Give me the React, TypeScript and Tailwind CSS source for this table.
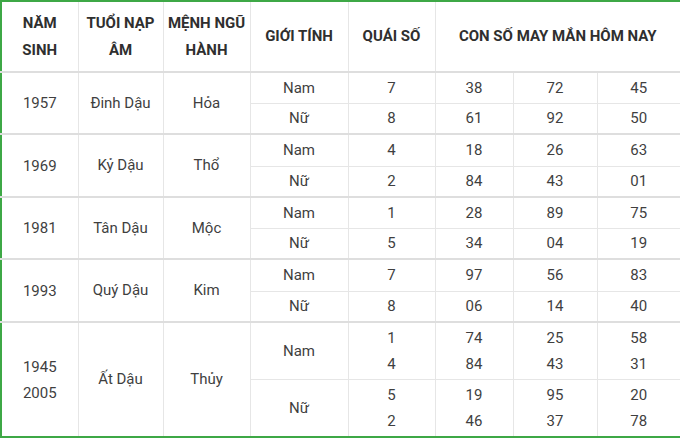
import React from "react";

type Sub = { g: string; q: string[]; n: string[][] };
type Group = { years: string[]; tuoi: string; menh: string; subs: Sub[]; h: number[] };

const groups: Group[] = [
  { years: ["1957"], tuoi: "Đinh Dậu", menh: "Hỏa", h: [31, 31], subs: [
    { g: "Nam", q: ["7"], n: [["38"], ["72"], ["45"]] },
    { g: "Nữ", q: ["8"], n: [["61"], ["92"], ["50"]] },
  ] },
  { years: ["1969"], tuoi: "Kỷ Dậu", menh: "Thổ", h: [32, 31], subs: [
    { g: "Nam", q: ["4"], n: [["18"], ["26"], ["63"]] },
    { g: "Nữ", q: ["2"], n: [["84"], ["43"], ["01"]] },
  ] },
  { years: ["1981"], tuoi: "Tân Dậu", menh: "Mộc", h: [31, 31], subs: [
    { g: "Nam", q: ["1"], n: [["28"], ["89"], ["75"]] },
    { g: "Nữ", q: ["5"], n: [["34"], ["04"], ["19"]] },
  ] },
  { years: ["1993"], tuoi: "Quý Dậu", menh: "Kim", h: [32, 31], subs: [
    { g: "Nam", q: ["7"], n: [["97"], ["56"], ["83"]] },
    { g: "Nữ", q: ["8"], n: [["06"], ["14"], ["40"]] },
  ] },
  { years: ["1945", "2005"], tuoi: "Ất Dậu", menh: "Thủy", h: [57, 58], subs: [
    { g: "Nam", q: ["1", "4"], n: [["74", "84"], ["25", "43"], ["58", "31"]] },
    { g: "Nữ", q: ["5", "2"], n: [["19", "46"], ["95", "37"], ["20", "78"]] },
  ] },
];

const cell = "border border-[#e6e6e6] text-center align-middle p-0";

function Lines({ items }: { items: string[] }) {
  return (
    <div className="flex flex-col items-center leading-[26px]">
      {items.map((t, i) => (
        <span key={i}>{t}</span>
      ))}
    </div>
  );
}

export default function App() {
  return (
    <div className="w-[680px] h-[438px] bg-white overflow-hidden">
      <table
        className="w-[680px] table-fixed border-collapse border-2 border-[#3ea846] text-[15px] text-[#3f3f3f]"
        style={{ fontFamily: "Roboto, 'Noto Sans', sans-serif" }}
      >
        <colgroup>
          <col className="w-[77px]" />
          <col className="w-[85px]" />
          <col className="w-[87px]" />
          <col className="w-[98px]" />
          <col className="w-[87px]" />
          <col className="w-[78px]" />
          <col className="w-[84px]" />
          <col className="w-[84px]" />
        </colgroup>
        <thead>
          <tr className="h-[71px] font-bold text-[#2f2f2f] leading-[27px]">
            <th className={cell}>NĂM<br />SINH</th>
            <th className={cell}>TUỔI NẠP<br />ÂM</th>
            <th className={cell}>MỆNH NGŨ<br />HÀNH</th>
            <th className={cell}>GIỚI TÍNH</th>
            <th className={cell}>QUÁI SỐ</th>
            <th className={cell} colSpan={3}>CON SỐ MAY MẮN HÔM NAY</th>
          </tr>
        </thead>
        <tbody>
          {groups.map((grp, gi) =>
            grp.subs.map((s, si) => {
              const top = si === 0 ? "border-t-2 border-t-[#dedede]" : "";
              return (
                <tr key={`${gi}-${si}`} style={{ height: grp.h[si] }}>
                  {si === 0 && (
                    <>
                      <td className={`${cell} ${top}`} rowSpan={2}>
                        <Lines items={grp.years} />
                      </td>
                      <td className={`${cell} ${top}`} rowSpan={2}>{grp.tuoi}</td>
                      <td className={`${cell} ${top}`} rowSpan={2}>{grp.menh}</td>
                    </>
                  )}
                  <td className={`${cell} ${top}`}>{s.g}</td>
                  <td className={`${cell} ${top}`}><Lines items={s.q} /></td>
                  {s.n.map((col, ci) => (
                    <td key={ci} className={`${cell} ${top}`}>
                      <Lines items={col} />
                    </td>
                  ))}
                </tr>
              );
            })
          )}
        </tbody>
      </table>
    </div>
  );
}
